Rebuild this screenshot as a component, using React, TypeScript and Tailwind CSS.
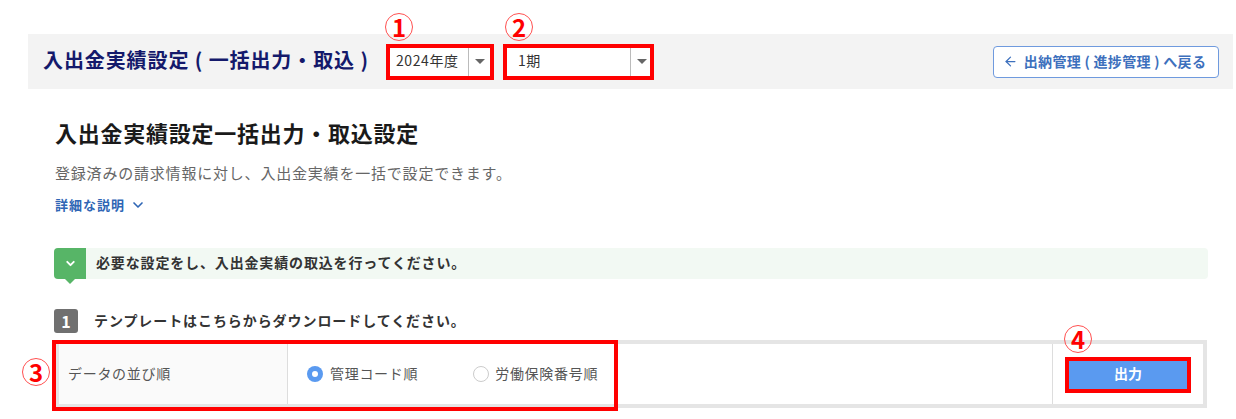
import React from "react";
import { ArrowLeft, ChevronDown } from "lucide-react";

const font = { fontFamily: '"Noto Sans CJK JP", "Noto Sans", sans-serif' };

const Marker = ({ n, className }: { n: string; className: string }) => (
  <div
    className={`absolute flex h-[28px] w-[28px] items-center justify-center rounded-full border border-[#ff5050] text-[24px] leading-none font-bold text-[#ff0000] ${className}`}
  >
    {n}
  </div>
);

const Select = ({ label, className }: { label: string; className: string }) => (
  <div className={`flex h-[29px] items-center bg-white ${className}`}>
    <span className="flex-1 pb-[3px] text-[14px] leading-[26px] tracking-[0.6px] text-[#333]">{label}</span>
    <span className="flex h-full w-[22px] items-center justify-center border-l border-[#bbb]">
      <span className="h-0 w-0 border-x-[5px] border-t-[5px] border-x-transparent border-t-[#666]" />
    </span>
  </div>
);

export default function App() {
  return (
    <div className="relative h-[419px] w-[1236px] overflow-hidden bg-white" style={font}>
      <div className="pt-[34px] pr-[3px] pl-[28px]">
        {/* header */}
        <header className="flex h-[55px] items-center bg-[#f3f3f3] pr-[14px] pl-[15px]">
          <h1 className="w-[343px] pb-[3px] text-[20px] font-bold tracking-[0.9px] whitespace-nowrap text-[#14196b]">
            入出金実績設定 ( 一括出力・取込 )
          </h1>
          <Select label="2024年度" className="ml-[4px] w-[100px] pl-[6px]" />
          <Select label="1期" className="ml-[17px] w-[145px] pl-[11px]" />
          <button className="ml-auto flex h-[32px] w-[226px] items-center justify-center gap-[6px] rounded-[4px] border border-[#6f9ade] bg-white pr-[3px] pb-[1px] text-[14px] font-bold tracking-[0.3px] text-[#3d70bd]">
            <ArrowLeft size={15} strokeWidth={2} />
            出納管理 ( 進捗管理 ) へ戻る
          </button>
        </header>

        <main className="pr-[26px] pl-[27px]">
          <h2 className="mt-[28px] text-[22px] leading-[30px] font-bold tracking-[0.75px] text-[#1a1a1a]">
            入出金実績設定一括出力・取込設定
          </h2>
          <p className="mt-[16px] text-[15px] leading-[20px] tracking-[0.8px] text-[#666]">
            登録済みの請求情報に対し、入出金実績を一括で設定できます。
          </p>
          <a className="mt-[13px] flex h-[18px] items-center gap-[5px] text-[13px] font-bold tracking-[1px] text-[#2f66b5]">
            詳細な説明
            <ChevronDown size={16} strokeWidth={2.5} />
          </a>

          {/* notice */}
          <div className="mt-[34px] -mx-[1px] flex h-[31px] items-center rounded-[4px] bg-[#f2f9f3]">
            <div className="relative flex h-full w-[32px] items-center justify-center rounded-l-[4px] bg-[#57b567]">
              <ChevronDown size={13} strokeWidth={3.5} className="text-white" />
              <span className="absolute top-full left-[11px] h-0 w-0 border-x-[5px] border-t-[5px] border-x-transparent border-t-[#57b567]" />
            </div>
            <p className="ml-[10px] pb-[2px] text-[14px] font-bold tracking-[0.85px] text-[#333]">
              必要な設定をし、入出金実績の取込を行ってください。
            </p>
          </div>

          {/* step */}
          <div className="mt-[30px] -ml-[1px] flex h-[24px] items-center">
            <span className="flex h-[24px] w-[24px] items-center justify-center rounded-[3px] bg-[#707070] text-[16px] font-bold text-white">
              1
            </span>
            <p className="ml-[16px] pb-[2px] text-[14px] font-bold tracking-[0.92px] text-[#333]">
              テンプレートはこちらからダウンロードしてください。
            </p>
          </div>

          {/* table */}
          <div className="mt-[7px] flex h-[68px] border-[4px] border-[#e5e5e5] bg-white">
            <div className="flex w-[229px] items-center border-r border-[#ddd] bg-[#fafafa] pb-[1px] pl-[9px] text-[14px] tracking-[0.7px] text-[#555]">
              データの並び順
            </div>
            <div className="flex flex-1 items-center pl-[19px] text-[14px] tracking-[0.7px] text-[#555]">
              <span className="flex h-[16px] w-[16px] items-center justify-center rounded-full bg-[#5a9af0]">
                <span className="h-[6px] w-[6px] rounded-full bg-white" />
              </span>
              <span className="ml-[7px] pb-[1px]">管理コード順</span>
              <span className="ml-[55px] h-[16px] w-[16px] rounded-full border border-[#ccc] bg-white" />
              <span className="ml-[6px] pb-[1px]">労働保険番号順</span>
            </div>
            <div className="flex w-[151px] items-center justify-center border-l border-[#ddd]">
              <button className="h-[30px] w-[120px] bg-[#5a9af0] pb-[1px] text-[14px] font-bold text-white">
                出力
              </button>
            </div>
          </div>
        </main>
      </div>

      {/* annotations */}
      <div className="absolute top-[44px] left-[386px] h-[36px] w-[108px] border-[4px] border-[#ff0000]" />
      <div className="absolute top-[44px] left-[503px] h-[36px] w-[151px] border-[4px] border-[#ff0000]" />
      <div className="absolute top-[340px] left-[52px] h-[71px] w-[566px] border-[4px] border-[#ff0000]" />
      <div className="absolute top-[357px] left-[1065px] h-[36px] w-[126px] border-[4px] border-[#ff0000]" />
      <Marker n="1" className="top-[13px] left-[385px]" />
      <Marker n="2" className="top-[13px] left-[505px]" />
      <Marker n="3" className="top-[358px] left-[22px]" />
      <Marker n="4" className="top-[325px] left-[1064px]" />
    </div>
  );
}
